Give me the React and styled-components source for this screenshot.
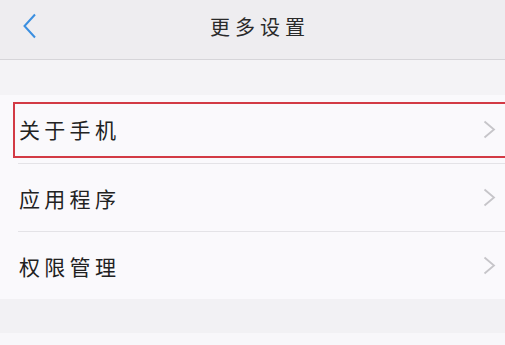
import React from "react";
import styled, { createGlobalStyle } from "styled-components";

const GlobalStyle = createGlobalStyle`
  html, body {
    margin: 0;
    padding: 0;
    background: #f4f3f6;
    font-family: "Noto Sans CJK SC", "Noto Sans", sans-serif;
  }
`;

const Page = styled.div`
  width: 505px;
  height: 345px;
  overflow: hidden;
  display: flex;
  flex-direction: column;
  background: #f4f3f6;
`;

const Header = styled.div`
  height: 59px;
  flex-shrink: 0;
  display: flex;
  align-items: center;
  justify-content: center;
  position: relative;
  background: #eeedf0;
  border-bottom: 1px solid #d6d5d9;
`;

const BackButton = styled.div`
  position: absolute;
  left: 22px;
  top: 13px;
  width: 16px;
  height: 26px;
  display: flex;
`;

const Title = styled.div`
  font-size: 20px;
  letter-spacing: 5px;
  color: #2a2a2a;
  margin-left: 15px;
  margin-top: -7px;
`;

const Spacer = styled.div`
  height: ${(p) => p.h}px;
  flex-shrink: 0;
  background: ${(p) => p.bg};
`;

const List = styled.div`
  background: #faf9fc;
  display: flex;
  flex-direction: column;
`;

const Row = styled.div`
  height: ${(p) => p.h}px;
  display: flex;
  align-items: center;
  padding-right: 9px;
  position: relative;
  border-top: ${(p) => (p.divider ? "1px solid #e4e3e7" : "none")};
  margin-left: ${(p) => (p.divider ? "18px" : "0")};
  padding-left: ${(p) => (p.divider ? "1px" : "19px")};
`;

const Label = styled.div`
  flex: 1;
  font-size: 21px;
  letter-spacing: 4.3px;
  color: #222;
`;

const Highlight = styled.div`
  position: absolute;
  left: 13px;
  right: -4px;
  top: 7px;
  bottom: 5px;
  border: 2px solid #d33a45;
  pointer-events: none;
`;

const Chevron = () => (
  <svg width="13" height="19" viewBox="0 0 13 19">
    <path d="M1.5 1.5 L11 9.5 L1.5 17.5" fill="none" stroke="#c6c5c9" strokeWidth="1.8" />
  </svg>
);

const items = [
  { label: "关于手机", h: 68, selected: true },
  { label: "应用程序", h: 67 },
  { label: "权限管理", h: 67 },
];

const App = () => (
  <Page>
    <GlobalStyle />
    <Header>
      <BackButton>
        <svg width="16" height="26" viewBox="0 0 16 26">
          <path d="M13 1.5 L2.5 13 L13 24.5" fill="none" stroke="#3b8fe0" strokeWidth="2" />
        </svg>
      </BackButton>
      <Title>更多设置</Title>
    </Header>
    <Spacer h={35} bg="#f4f3f6" />
    <List>
      {items.map((it, i) => (
        <Row key={it.label} h={it.h} divider={i > 0}>
          {it.selected && <Highlight />}
          <Label>{it.label}</Label>
          <Chevron />
        </Row>
      ))}
    </List>
    <Spacer h={34} bg="#f2f1f4" />
    <Spacer h={20} bg="#f8f7fa" />
  </Page>
);

export default App;
